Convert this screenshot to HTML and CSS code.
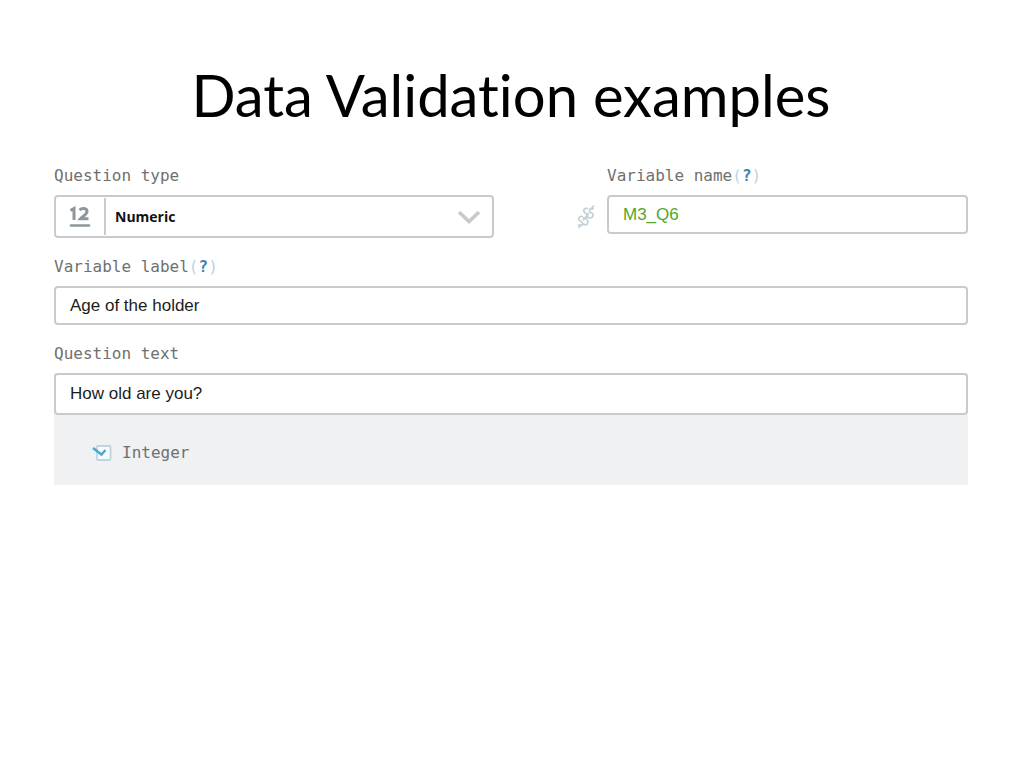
FILE: index.html
```html
<!DOCTYPE html>
<html lang="en">
<head>
<meta charset="utf-8">
<title>Data Validation examples</title>
<link rel="stylesheet" href="styles.css">
</head>
<body>
<main class="slide">
  <h1 class="title">Data Validation examples</h1>
  <form class="form">
    <div class="top-row">
      <div class="field">
        <label class="label" for="qtype">Question type</label>
        <div class="select-box">
          <svg class="type-icon" viewBox="0 0 22 22" width="22" height="22" aria-hidden="true">
            <g fill="none" stroke="#8b979c" stroke-width="3">
              <path d="M1.500 4.500 5 2.500V14"/>
              <path d="M10.500 4C12.500 2 18 1.500 18 5.500C18 8.500 14 10 11.500 12.800H19.500"/>
              <path d="M2 19.500H20" stroke-width="2.600" stroke-linecap="round"/>
            </g>
          </svg>
          <select class="select" id="qtype"><option>Numeric</option></select>
          <svg class="chevron" viewBox="0 0 24 14" width="24" height="14" aria-hidden="true">
            <path d="M2 2 12 11.500 22 2" fill="none" stroke="#c6cacc" stroke-width="3.600"/>
          </svg>
        </div>
      </div>
      <svg class="link-icon" viewBox="0 0 18 24" width="18" height="24" aria-hidden="true">
        <g fill="none" stroke="#c3d1d8" stroke-width="1.700" stroke-linecap="round">
          <path d="M10.500 3.500C8 2.500 5.500 5.500 7.500 7.500C9 8.500 11 9 10.500 11.500C10 13.500 8 14 6.500 13"/>
          <path d="M16 4C13.500 2.500 11.500 5 13 7C14.500 8 17 8.500 16 11C15 13 13 13.500 11.500 12.500"/>
          <path d="M5.500 11.500C3 10.500 .800 13 2 15C3.500 16.500 6 16.500 5.500 19C5 21 3 21 1.500 20"/>
          <path d="M10 14.500C11.500 16 11.500 19 9 19.800C8 20 7 19.800 6.500 19"/>
          <path d="M16.500 1 14.500 4M11.500 8.500 6.500 15M3.500 20 2 22.500"/>
        </g>
      </svg>
      <div class="field">
        <div class="label"><label for="vname">Variable name</label><a class="help" href="#vname">(<b>?</b>)</a></div>
        <input class="input green" id="vname" type="text" value="M3_Q6">
      </div>
    </div>
    <div class="field">
      <div class="label"><label for="vlabel">Variable label</label><a class="help" href="#vlabel">(<b>?</b>)</a></div>
      <input class="input" id="vlabel" type="text" value="Age of the holder">
    </div>
    <div class="field">
      <label class="label" for="qtext">Question text</label>
      <div class="panel">
        <input class="input tall" id="qtext" type="text" value="How old are you?">
        <label class="check-row">
          <input class="check" type="checkbox" checked>
          <svg viewBox="0 0 20 16" width="20" height="16" aria-hidden="true">
            <rect x="5" y="1" width="13.500" height="14" rx="1" fill="#f8fbfc" stroke="#bcd5df" stroke-width="1.800"/>
            <path d="M1 3 9.500 9.500 13.500 5" fill="none" stroke="#43a9d3" stroke-width="2.400"/>
          </svg>
          <span>Integer</span>
        </label>
      </div>
    </div>
  </form>
</main>
</body>
</html>
```
FILE: styles.css
```css
* { box-sizing: border-box; }
body { margin: 0; background: #fff; color: #000; }
.slide { padding: 58px 56px 40px 54px; }
.title {
  margin: 0 0 34px;
  font: 400 58px/74px Lato, Carlito, sans-serif;
  font-variant-ligatures: none;
  text-align: center;
}
.form { display: flex; flex-direction: column; gap: 19px; }
.top-row { display: grid; grid-template-columns: 440fr 113px 361fr; }
.field { display: flex; flex-direction: column; gap: 9px; min-width: 0; }
.label, .check-row {
  font: 16px/20px "DejaVu Sans Mono", monospace;
  color: #707070;
}
.help { color: #b9d3e8; text-decoration: none; }
.help b { color: #4682b4; }
.select-box {
  display: grid;
  grid-template-columns: 48px 1fr 24px;
  align-items: center;
  height: 43px;
  padding-right: 11px;
  border: 2px solid #c8cacb;
  border-radius: 4px;
}
.type-icon { justify-self: center; }
.select {
  grid-area: 1 / 2 / 2 / 4;
  height: 37px;
  padding: 0 0 0 9px;
  border: 0;
  border-left: 2px solid #c8cacb;
  background: transparent;
  appearance: none;
  font: 700 14px "Open Sans", sans-serif;
  color: #111;
}
.chevron { grid-area: 1 / 3; pointer-events: none; }
.link-icon { justify-self: end; margin: 39px 12px 0 0; }
.input {
  width: 100%;
  height: 39px;
  padding: 0 14px;
  border: 2px solid #c8cacb;
  border-radius: 4px;
  background: #fff;
  font: 17px "Liberation Sans", Arial, sans-serif;
  color: #1c1c1c;
}
.tall { height: 42px; }
.green { color: #55a630; }
.panel { background: #eff1f3; }
.check-row {
  display: flex;
  align-items: center;
  gap: 10px;
  padding: 28px 0 22px 38px;
}
.check { position: absolute; opacity: 0; }
```
